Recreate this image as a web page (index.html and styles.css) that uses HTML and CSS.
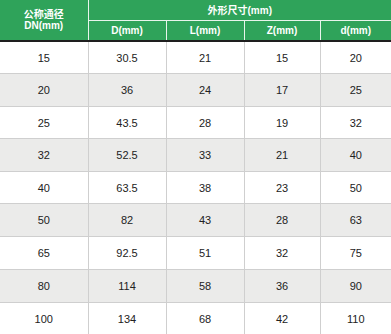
FILE: index.html
```html
<!DOCTYPE html>
<html lang="zh">
<head>
<meta charset="utf-8">
<link rel="stylesheet" href="styles.css">
</head>
<body>
<table class="spec">
  <colgroup>
    <col class="c1"><col class="c2"><col class="c3"><col class="c4"><col class="c5">
  </colgroup>
  <thead>
    <tr class="h1">
      <th rowspan="2" class="dn">公称通径<br>DN(mm)</th>
      <th colspan="4">外形尺寸(mm)</th>
    </tr>
    <tr class="h2">
      <th>D(mm)</th><th>L(mm)</th><th>Z(mm)</th><th>d(mm)</th>
    </tr>
  </thead>
  <tbody>
    <tr><td>15</td><td>30.5</td><td>21</td><td>15</td><td>20</td></tr>
    <tr class="alt"><td>20</td><td>36</td><td>24</td><td>17</td><td>25</td></tr>
    <tr><td>25</td><td>43.5</td><td>28</td><td>19</td><td>32</td></tr>
    <tr class="alt"><td>32</td><td>52.5</td><td>33</td><td>21</td><td>40</td></tr>
    <tr><td>40</td><td>63.5</td><td>38</td><td>23</td><td>50</td></tr>
    <tr class="alt"><td>50</td><td>82</td><td>43</td><td>28</td><td>63</td></tr>
    <tr class="tall"><td>65</td><td>92.5</td><td>51</td><td>32</td><td>75</td></tr>
    <tr class="alt"><td>80</td><td>114</td><td>58</td><td>36</td><td>90</td></tr>
    <tr><td>100</td><td>134</td><td>68</td><td>42</td><td>110</td></tr>
  </tbody>
</table>
</body>
</html>
```
FILE: styles.css
```css
html, body {
  margin: 0;
  padding: 0;
  background: #ffffff;
}
.spec {
  width: 391px;
  border-collapse: collapse;
  table-layout: fixed;
  font-family: "Liberation Sans", Arial, "Noto Sans CJK SC", sans-serif;
}
.c1 { width: 88px; }
.c2 { width: 78px; }
.c3 { width: 78px; }
.c4 { width: 76px; }
.c5 { width: 71px; }
.spec th {
  background: #2fa35a;
  color: #ffffff;
  font-weight: bold;
  font-size: 10px;
  line-height: 11px;
  padding: 0;
  text-align: center;
  border: 1px solid #e8f5ec;
  border-top: none;
}
.spec th:first-child { border-left: none; }
.spec th:last-child { border-right: none; }
.h1 th { height: 20px; }
.h2 th { height: 19px; border-bottom: 2px solid #1e1e1e; }
.spec th.dn { border-bottom: 2px solid #1e1e1e; }
.spec td {
  height: 31px;
  padding: 0;
  text-align: center;
  font-size: 11px;
  color: #222222;
  border: 1px solid #cfcfcf;
  border-top: none;
}
.spec tr.alt td,
.spec tr.tall td { height: 32px; }
.spec td:first-child { border-left: none; }
.spec td:last-child { border-right: none; }
.spec tbody tr:last-child td { border-bottom: none; }
.spec tr.alt td { background: #ebebea; }
```
